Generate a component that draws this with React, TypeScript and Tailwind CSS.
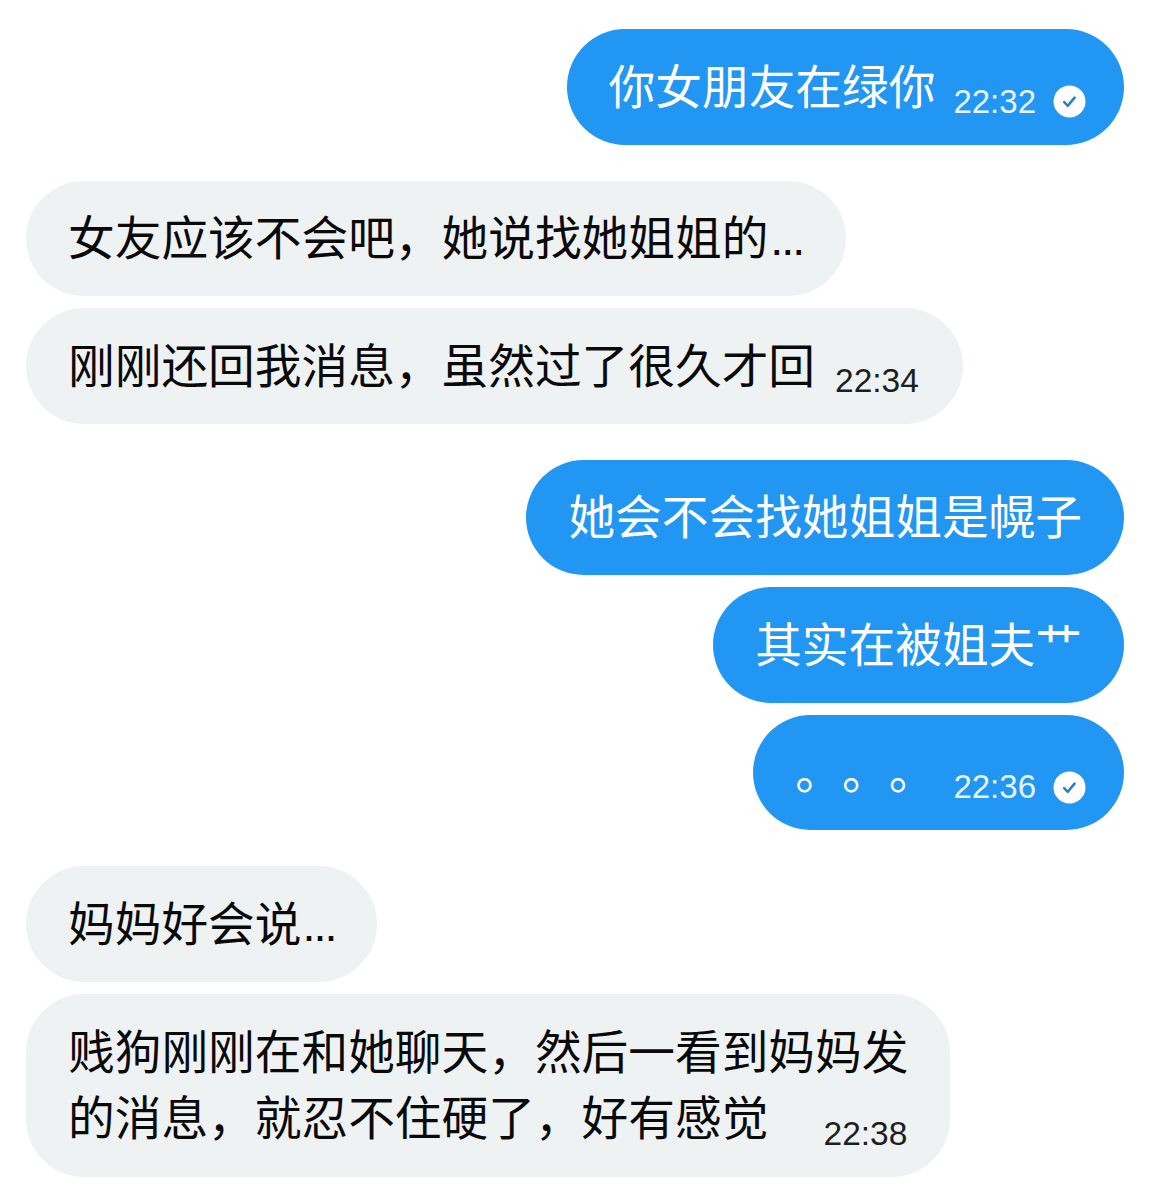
import type { ReactNode } from "react";

const FONT = "font-['Liberation_Sans','Noto_Sans_CJK_SC',sans-serif]";

function ReadTick() {
  return (
    <svg width="33" height="33" viewBox="0 0 33 33" className="ml-[17px] shrink-0">
      <circle cx="16.5" cy="16.5" r="16" fill="#fff" />
      <path d="M11.2 17.2l3.6 3.6 6.8-8.2" fill="none" stroke="#2b7cc0" strokeWidth="2.5" strokeLinecap="round" strokeLinejoin="round" />
    </svg>
  );
}

function Mine({ text, time }: { text: string; time?: string }) {
  return (
    <div className="flex items-center rounded-[58px] bg-[#2196f3] px-[42px] pt-[25.75px] pb-[23.75px] text-white">
      <span className="text-[46.7px] leading-[66px] whitespace-nowrap [text-spacing-trim:space-all]">{text}</span>
      {time && (
        <div className="flex items-center mt-[28px] mr-[-4px]">
          <span className="ml-[18px] text-[33px] leading-[36px] whitespace-nowrap text-[#e8f4fe]">{time}</span>
          <ReadTick />
        </div>
      )}
    </div>
  );
}

function Theirs({ children, time }: { children: ReactNode; time?: string }) {
  return (
    <div className={`flex items-center rounded-[58px] bg-[#eff2f3] pl-[42px] pt-[25.75px] pb-[23.75px] text-[#0a0a0a] ${time ? "pr-[44px]" : "pr-[42px]"}`}>
      <span className="text-[46.7px] leading-[66px] whitespace-nowrap">{children}</span>
      {time && <span className="mt-[28px] ml-[20px] text-[33.5px] leading-[36px] whitespace-nowrap text-[#1c1f22]">{time}</span>}
    </div>
  );
}

export default function App() {
  return (
    <div className={`${FONT} min-h-[1200px] bg-white px-[26px] pt-[29px] flex flex-col gap-[36px]`}>
      <div className="flex flex-col items-end gap-[12px]">
        <Mine text="你女朋友在绿你" time="22:32" />
      </div>

      <div className="flex flex-col items-start gap-[12px]">
        <Theirs>
          女友应该不会吧，她说找她姐姐的<span className="ml-[2px] mr-[1px] tracking-[-2px]">...</span>
        </Theirs>
        <Theirs time="22:34">刚刚还回我消息，虽然过了很久才回</Theirs>
      </div>

      <div className="flex flex-col items-end gap-[12px]">
        <Mine text="她会不会找她姐姐是幌子" />
        <Mine text="其实在被姐夫艹" />
        <Mine text="。。。" time="22:36" />
      </div>

      <div className="flex flex-col items-start gap-[12px]">
        <Theirs>
          妈妈好会说<span className="ml-[1px] tracking-[-2px]">...</span>
        </Theirs>
        <div className="rounded-[58px] bg-[#eff2f3] px-[42px] pt-[26px] pb-[25px] text-[#0a0a0a]">
          <div className="text-[46.7px] leading-[66px] whitespace-nowrap">贱狗刚刚在和她聊天，然后一看到妈妈发</div>
          <div className="flex items-center justify-between">
            <span className="text-[46.7px] leading-[66px] whitespace-nowrap">的消息，就忍不住硬了，好有感觉</span>
            <span className="mt-[30px] mr-[1px] text-[33.5px] leading-[36px] whitespace-nowrap text-[#1c1f22]">22:38</span>
          </div>
        </div>
      </div>
    </div>
  );
}
